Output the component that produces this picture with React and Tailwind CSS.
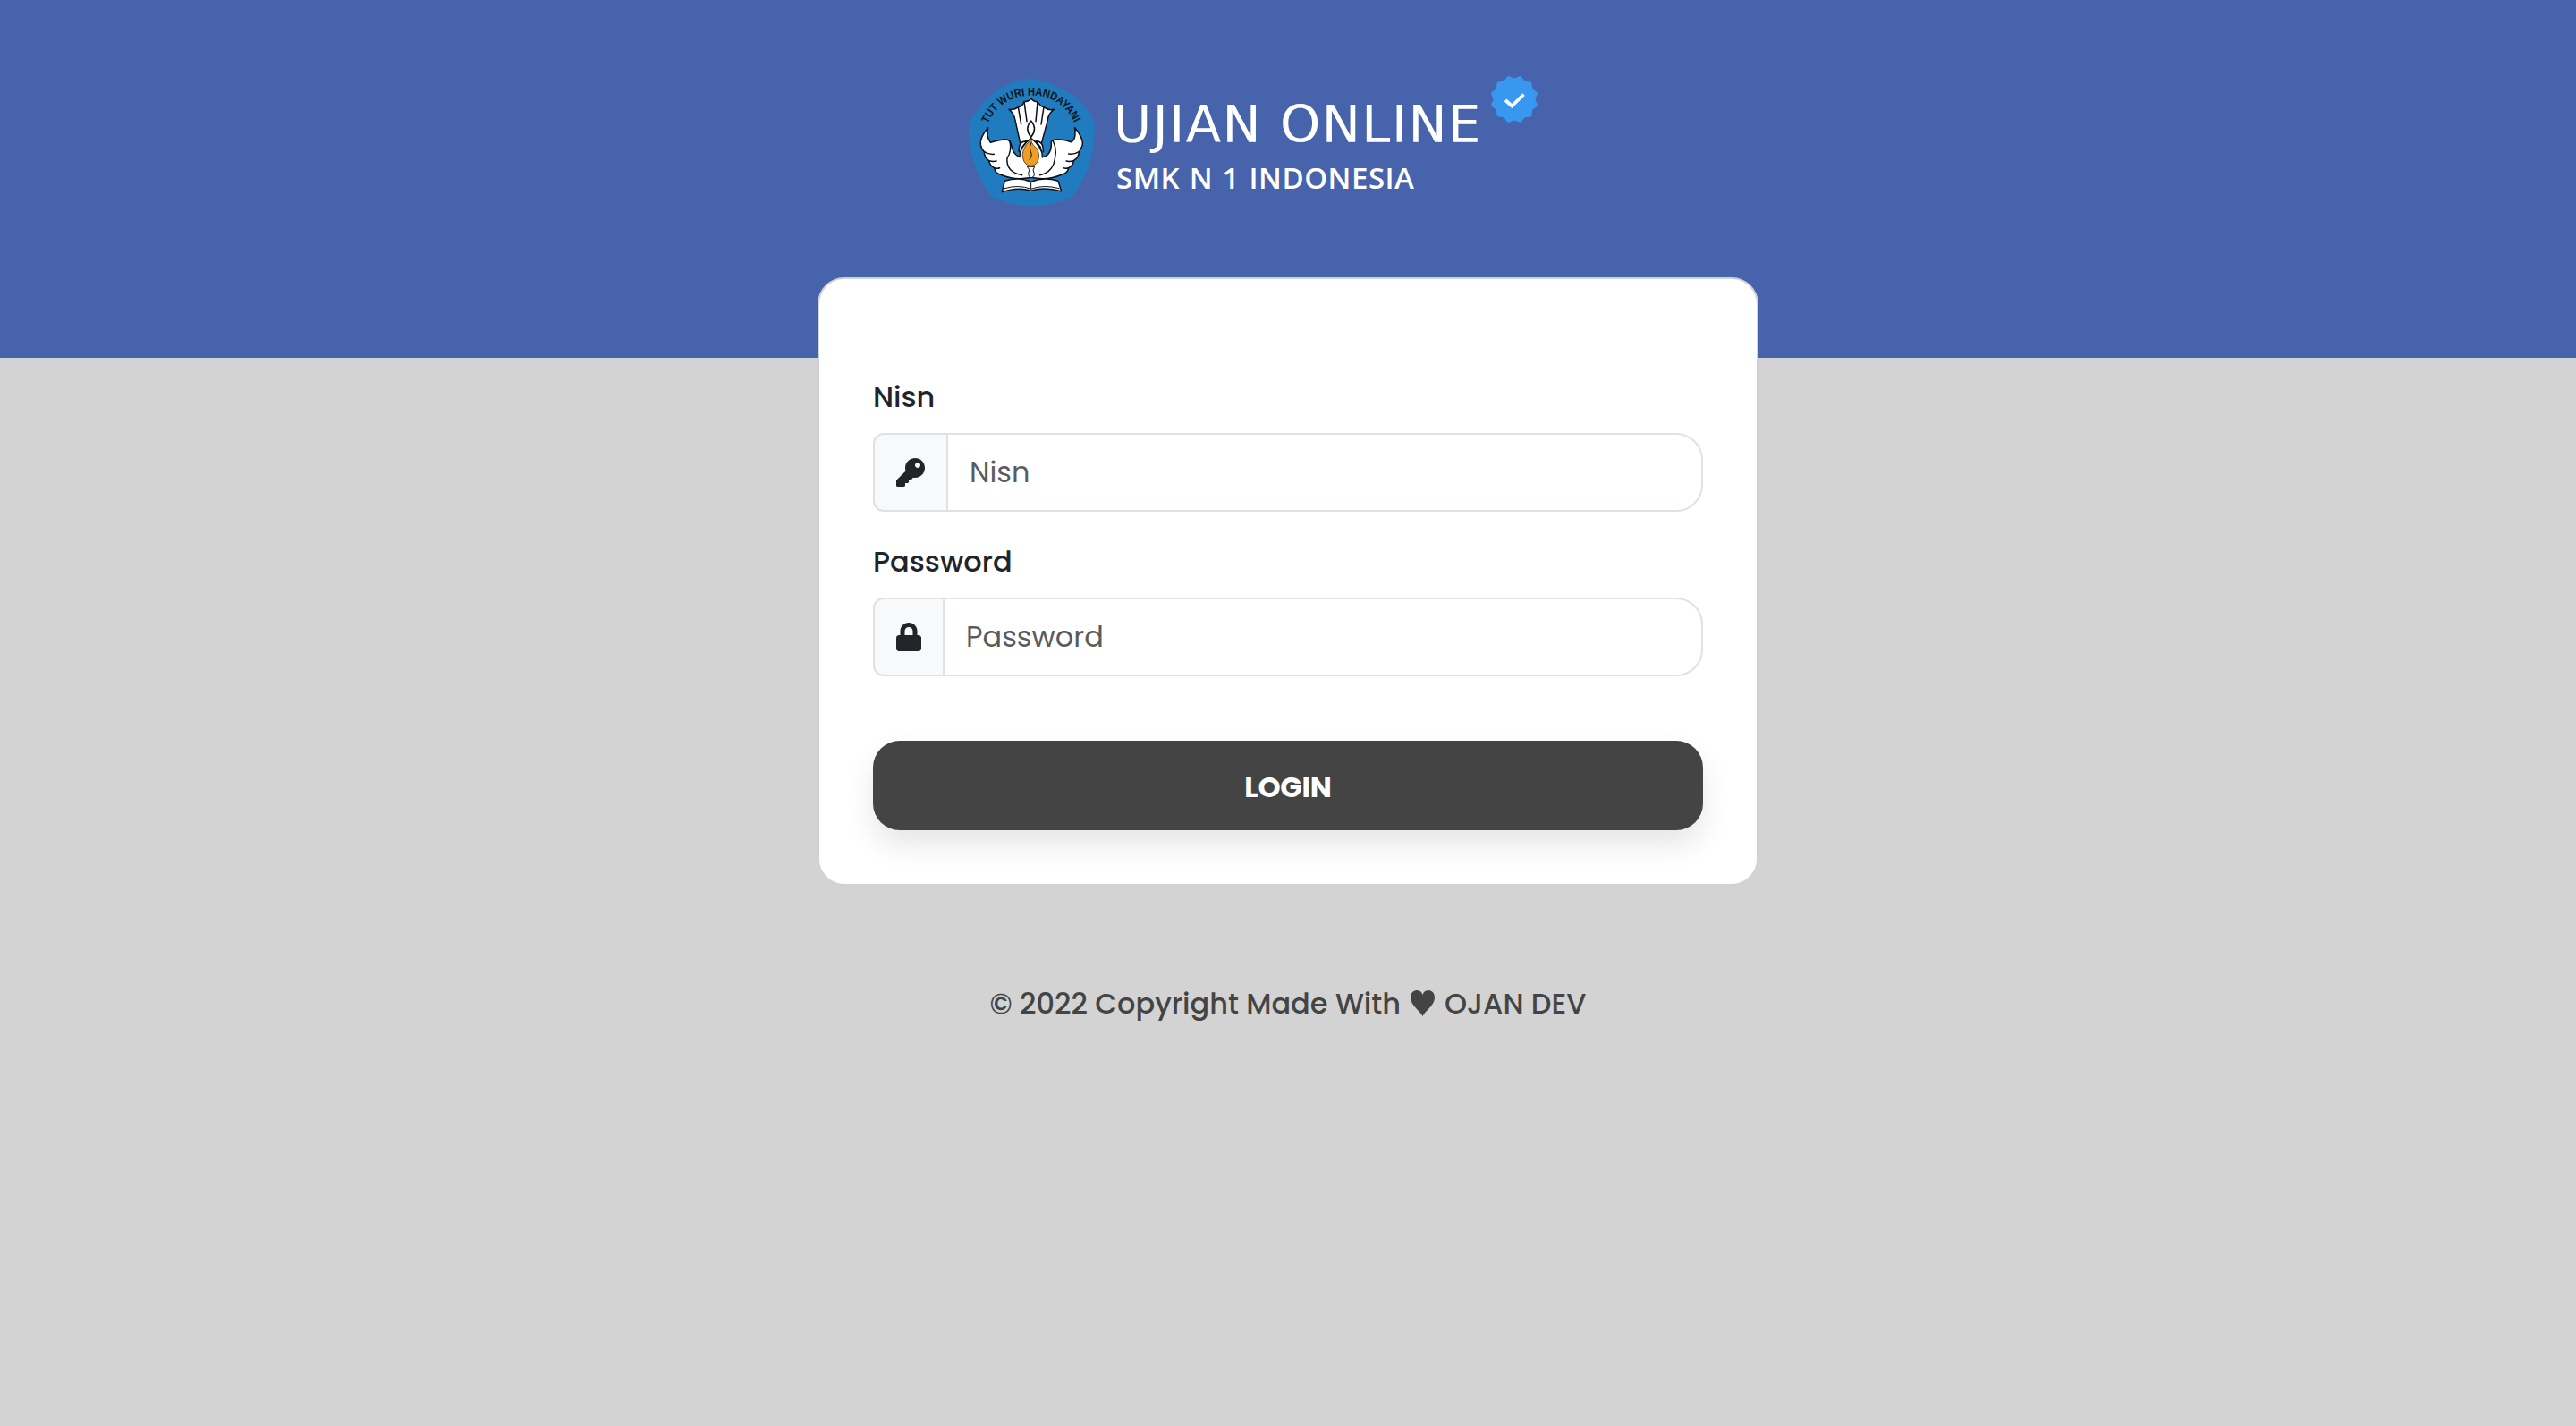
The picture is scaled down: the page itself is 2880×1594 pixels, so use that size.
import { FaKey, FaLock } from "react-icons/fa";

function Emblem() {
  return (
    <svg width="170" height="170" viewBox="0 0 510 510" className="block shrink-0">
      <path d="M250 37Q335 58 390 97Q440 135 461 185Q468 330 385 436Q250 496 118 436Q32 330 39 185Q82 118 130 80Q190 45 250 37Z" fill="#207bbf" />
      <defs><path id="arc" d="M104 190C132 126 186 95 250 95C318 95 370 128 402 204" /></defs>
      <text fontFamily="Liberation Sans" fontSize="38" fontWeight="700" fill="#0b1622"><textPath href="#arc" textLength="366" lengthAdjust="spacingAndGlyphs">TUT WURI HANDAYANI</textPath></text>
      <g fill="#fff" stroke="#0b1118" strokeWidth="4.5" strokeLinejoin="round" strokeLinecap="round">
        <path d="M174 142Q194 144 205 134Q218 133 225 116Q241 116 248 105Q256 116 270 116Q280 133 291 134Q306 147 325 142Q306 155 304 178L282 260H213L195 178Q191 154 174 142Z" />
        <path d="M205 134L215 192M225 116L234 182M270 116L264 182M291 134L282 192" fill="none" />
        <path d="M104 203Q76 235 79 260Q82 276 91 284Q91 302 107 314Q109 330 125 338Q127 356 145 360Q194 382 248 370Q303 382 352 360Q371 356 374 338Q390 330 391 314Q409 302 409 284Q425 262 420 247Q414 225 395 203Q400 246 382 251Q343 239 327 244Q312 246 316 262Q314 298 286 302Q288 270 248 238Q208 270 210 302Q186 292 181 258Q177 242 159 242Q133 246 112 253Q97 234 104 203Z" />
        <path d="M91 284Q107 294 124 292M107 314Q121 318 132 315M125 338Q134 341 143 338M409 284Q390 295 374 291M391 314Q377 318 366 315M374 338Q364 341 356 338M177 246Q184 285 168 304Q163 352 218 362M321 246Q335 275 329 300Q325 352 278 362" fill="none" />
        <path d="M208 284Q205 247 234 248L217 270M289 284Q290 247 264 248L281 270" />
        <path d="M248 180Q225 207 248 235Q271 207 248 180Z" />
        <path d="M248 242Q211 278 222 309Q227 329 248 331Q270 329 274 305Q278 278 256 262Q248 253 248 242Z" fill="#f09c25" stroke="#6b4a1c" strokeWidth="3" />
        <path d="M248 254Q240 270 247 284Q254 297 243 311" fill="none" strokeWidth="3" />
        <path d="M236 334H260L255 345Q265 368 249 371Q234 368 242 345Z" strokeWidth="3" />
        <path d="M160 382Q208 366 248 385Q290 366 339 382L350 416Q292 400 248 415Q204 400 151 419Z" />
        <path d="M160 407Q206 393 248 409Q292 393 342 407M248 387V408" fill="none" strokeWidth="3" />
      </g>
    </svg>
  );
}

function Badge() {
  const pts = Array.from({ length: 24 }, (_, i) => {
    const a = ((i * 15 + 15) * Math.PI) / 180;
    const r = i % 2 ? 23.4 : 27.2;
    return `${27 + r * Math.sin(a)},${27 - r * Math.cos(a)}`;
  }).join(" ");
  return (
    <svg width="54" height="54" viewBox="0 0 54 54" className="block">
      <polygon points={pts} fill="#3897f0" />
      <path d="M17 28L24.3 34.5L37.5 21.5" fill="none" stroke="#fff" strokeWidth="3.8" />
    </svg>
  );
}

function Field({ label, type, icon, addon }) {
  return (
    <div className="h-[184px]">
      <label className="block h-[72px] pt-0.5 text-[32px] leading-[60px] font-medium text-[#212529]">{label}</label>
      <div className="flex h-[88px] w-[928px]">
        <span className={`flex items-center rounded-l-[12px] border-2 border-[#dee2e6] bg-[#f8f9fa] text-[32px] text-[#212529] ${addon}`}>{icon}</span>
        <input type={type} placeholder={label} className="-ml-0.5 h-[88px] min-w-0 flex-1 rounded-r-[30px] border-2 border-[#dee2e6] bg-white pl-6 text-[32px] outline-none placeholder:text-[#595c5f] placeholder:opacity-100" />
      </div>
    </div>
  );
}

export default function App() {
  return (
    <div className="h-[1594px] bg-[#d3d3d3] font-['Poppins','Inter',sans-serif]">
      <header className="h-[400px] bg-[#4763ab] pt-[75px]">
        <div className="flex pl-[1070px]">
          <Emblem />
          <div className="w-[414px] pl-[5px]">
            <div className="h-[88px] whitespace-nowrap pt-[23px] font-['DejaVu_Sans'] text-[57.6px] leading-[84px] tracking-[1.5px] text-white">UJIAN ONLINE</div>
            <div className="whitespace-nowrap pl-[3px] pt-[14px] font-['Open_Sans'] text-[33px] font-semibold leading-[44px] tracking-[0.5px] text-white [word-spacing:1.5px]">SMK N 1 INDONESIA</div>
          </div>
          <div className="pl-[12px] pt-[9px]"><Badge /></div>
        </div>
      </header>
      <main className="relative mx-auto -mt-[90px] h-[680px] w-[1052px] rounded-[30px] border-2 border-[#d2d2d2] bg-white px-[60px] pt-[100px]">
        <Field label="Nisn" type="text" icon={<FaKey />} addon="w-[84px] pl-6" />
        <Field label="Password" type="password" icon={<FaLock />} addon="w-[80px] pl-[22px]" />
        <button className="mt-[48px] h-[100px] w-[928px] rounded-[30px] bg-[#444444] pt-1 text-[32px] font-bold tracking-[-0.2px] text-white shadow-[0_16px_32px_rgba(0,0,0,0.1)]">LOGIN</button>
      </main>
      <footer className="mt-[102px] flex h-[60px] items-center justify-center whitespace-nowrap text-[32px] font-medium text-[#444444]">
        <span>© 2022 Copyright Made With</span>
        <svg width="27" height="29" viewBox="0 0 27 29" className="mx-[11px] -mt-px"><path d="M13.5 29C10 22 0 17 0 8C0 -1 11 -3 13.5 5C16 -3 27 -1 27 8C27 17 17 22 13.5 29Z" fill="currentColor" /></svg>
        <span>OJAN DEV</span>
      </footer>
    </div>
  );
}
